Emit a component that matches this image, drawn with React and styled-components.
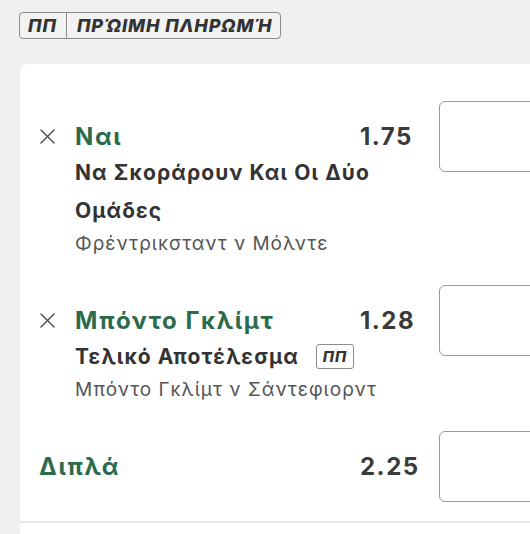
import styled, { createGlobalStyle } from 'styled-components';

const GlobalStyle = createGlobalStyle`
  html, body {
    margin: 0;
    padding: 0;
    background: #f0f0f0;
    overflow: hidden;
  }
  body {
    font-family: Inter, "Noto Sans", "DejaVu Sans", sans-serif;
    color: #333;
  }
`;

const Page = styled.div`
  width: 530px;
  height: 534px;
  overflow: hidden;
  padding-top: 12px;
  box-sizing: border-box;
`;

const PayoutBadge = styled.div`
  display: inline-flex;
  align-items: stretch;
  height: 27px;
  margin-left: 19px;
  box-sizing: border-box;
  border: 1.5px solid #8c8c8c;
  border-radius: 4px;
  background: #f2f2f2;
  font-style: italic;
  font-weight: 800;
  font-size: 18px;
  color: #333;
`;

const BadgePart = styled.span`
  display: flex;
  align-items: center;
  padding: 0 ${props => (props.$wide ? '8px' : '9px')} 0 ${props => (props.$wide ? '10px' : '8px')};
  border-left: ${props => (props.$wide ? '1.5px solid #8c8c8c' : 'none')};
  letter-spacing: ${props => (props.$wide ? '0.9px' : '1px')};
`;

const Card = styled.div`
  margin: 25px 0 0 20px;
  width: 640px;
  background: #fff;
  border-radius: 8px 0 0 0;
  padding: 54px 0 0 19px;
  box-sizing: border-box;
  min-height: 500px;
`;

const Selection = styled.div`
  display: grid;
  grid-template-columns: 36px 350px 14px 150px;
  margin-bottom: 44px;
`;

const Remove = styled.button`
  grid-row: 1;
  grid-column: 1;
  align-self: center;
  width: 16px;
  height: 16px;
  padding: 0;
  border: none;
  background: none;
  display: flex;
  align-items: center;
  justify-content: center;
`;

const TitleLine = styled.div`
  grid-row: 1;
  grid-column: 2;
  display: flex;
  align-items: center;
  height: 36px;
`;

const Title = styled.div`
  flex: 1;
  font-size: 24px;
  font-weight: 700;
  color: #2b6b4c;
  letter-spacing: 1.6px;
`;

const Odds = styled.div`
  width: 65px;
  font-size: 24px;
  font-weight: 700;
  color: #3a3a3a;
  letter-spacing: 1.5px;
`;

const Market = styled.div`
  grid-row: 2;
  grid-column: 2;
  font-size: 21px;
  font-weight: 700;
  line-height: 38px;
  color: #333;
  letter-spacing: 1.1px;
`;

const Event = styled.div`
  grid-row: 3;
  grid-column: 2;
  font-size: 19px;
  line-height: 28px;
  color: #555;
  letter-spacing: 1px;
`;

const StakeInput = styled.input`
  grid-row: 1;
  grid-column: ${props => props.$col || 4};
  align-self: center;
  height: 71px;
  margin: -17.5px 0;
  box-sizing: border-box;
  border: 1.5px solid #9a9a9a;
  border-radius: 6px;
  background: #fff;
  outline: none;
`;

const InlineBadge = styled.span`
  display: inline-flex;
  align-items: center;
  justify-content: center;
  vertical-align: middle;
  width: 38px;
  height: 25px;
  margin-left: 17px;
  box-sizing: border-box;
  border: 1.5px solid #8c8c8c;
  border-radius: 3px;
  font-size: 15px;
  font-style: italic;
  font-weight: 800;
  letter-spacing: 1px;
  line-height: 1;
  position: relative;
  top: -2px;
`;

const MultipleRow = styled.div`
  display: grid;
  grid-template-columns: 386px 14px 150px;
  grid-template-rows: 36px;
  margin-bottom: 37px;
`;

const MultipleTitle = styled.div`
  grid-row: 1;
  grid-column: 1;
  display: flex;
  align-items: center;
`;

const Divider = styled.div`
  height: 2px;
  background: #e8e8e8;
  margin-left: -19px;
`;

function CloseIcon() {
  return (
    <svg width="15" height="15" viewBox="0 0 15 15">
      <path d="M1 1L14 14M14 1L1 14" stroke="#555" strokeWidth="1.5" strokeLinecap="round" />
    </svg>
  );
}

const selections = [
  { title: 'Ναι', odds: '1.75', market: 'Να Σκοράρουν Και Οι Δύο Ομάδες', event: 'Φρέντρικσταντ ν Μόλντε' },
  { title: 'Μπόντο Γκλίμτ', odds: '1.28', market: 'Τελικό Αποτέλεσμα', badge: true, event: 'Μπόντο Γκλίμτ ν Σάντεφιορντ' },
];

export default function App() {
  return (
    <Page>
      <GlobalStyle />
      <PayoutBadge>
        <BadgePart>ΠΠ</BadgePart>
        <BadgePart $wide>ΠΡΏΙΜΗ ΠΛΗΡΩΜΉ</BadgePart>
      </PayoutBadge>
      <Card>
        {selections.map(sel => (
          <Selection key={sel.title}>
            <Remove aria-label="Αφαίρεση">
              <CloseIcon />
            </Remove>
            <TitleLine>
              <Title>{sel.title}</Title>
              <Odds>{sel.odds}</Odds>
            </TitleLine>
            <StakeInput />
            <Market>
              {sel.market}
              {sel.badge && <InlineBadge>ΠΠ</InlineBadge>}
            </Market>
            <Event>{sel.event}</Event>
          </Selection>
        ))}
        <MultipleRow>
          <MultipleTitle>
            <Title>Διπλά</Title>
            <Odds>2.25</Odds>
          </MultipleTitle>
          <StakeInput $col={3} />
        </MultipleRow>
        <Divider />
      </Card>
    </Page>
  );
}
